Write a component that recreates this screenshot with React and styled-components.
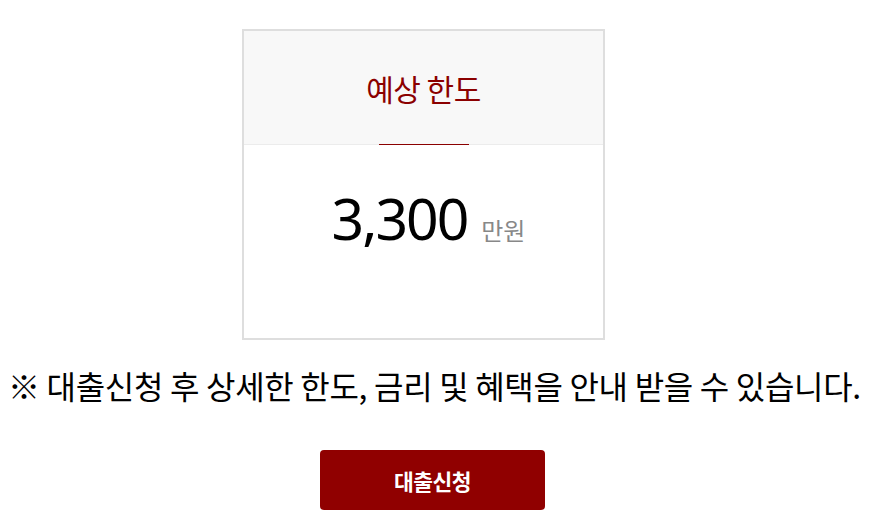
import styled, { createGlobalStyle } from "styled-components";

const GlobalStyle = createGlobalStyle`
  body {
    margin: 0;
    background: #fff;
    font-family: "Noto Sans CJK KR", "Noto Sans", sans-serif;
  }
`

function App() {
  return (
    <Page>
      <GlobalStyle />
      <Card>
        <CardHead>
          <Title>예상 한도</Title>
        </CardHead>
        <CardBody>
          <Amount>3,300</Amount>
          <Unit>만원</Unit>
        </CardBody>
      </Card>
      <Notice>※ 대출신청 후 상세한 한도, 금리 및 혜택을 안내 받을 수 있습니다.</Notice>
      <ApplyButton>대출신청</ApplyButton>
    </Page>
  )
}

export default App

const Page = styled.div`
  display: flex;
  flex-direction: column;
  align-items: flex-start;
  padding: 29px 0 0 8px;
`
const Card = styled.div`
  width: 359px;
  height: 307px;
  margin-left: 234px;
  border: 2px solid #dedede;
  display: flex;
  flex-direction: column;
`
const CardHead = styled.div`
  height: 113px;
  background: #f8f8f8;
  border-bottom: 1px solid #ececec;
  display: flex;
  align-items: center;
  justify-content: center;
  position: relative;
  &::after {
    content: "";
    position: absolute;
    left: 135px;
    bottom: -1px;
    width: 90px;
    height: 1px;
    background: #8b0000;
  }
`
const Title = styled.h2`
  margin: 0;
  font-size: 30px;
  line-height: 1.2;
  font-weight: 400;
  color: #8b0000;
  letter-spacing: -0.5px;
`
const CardBody = styled.div`
  display: flex;
  align-items: baseline;
  justify-content: center;
  gap: 14px;
  padding-top: 34px;
  padding-left: 10px;
`
const Amount = styled.span`
  font-family: "Noto Sans", sans-serif;
  font-size: 57px;
  font-weight: 400;
  color: #000;
  letter-spacing: -2px;
`
const Unit = styled.span`
  font-size: 24px;
  color: #888;
`
const Notice = styled.p`
  margin: 26px 0 0;
  font-size: 32px;
  line-height: 1.2;
  color: #000;
  letter-spacing: -0.3px;
`
const ApplyButton = styled.button`
  margin: 46px 0 0 312px;
  width: 225px;
  height: 60px;
  border: none;
  border-radius: 4px;
  background: #900000;
  color: #fff;
  font-family: "Noto Sans CJK KR", sans-serif;
  font-size: 21.5px;
  font-weight: 700;
  letter-spacing: -0.5px;
`
